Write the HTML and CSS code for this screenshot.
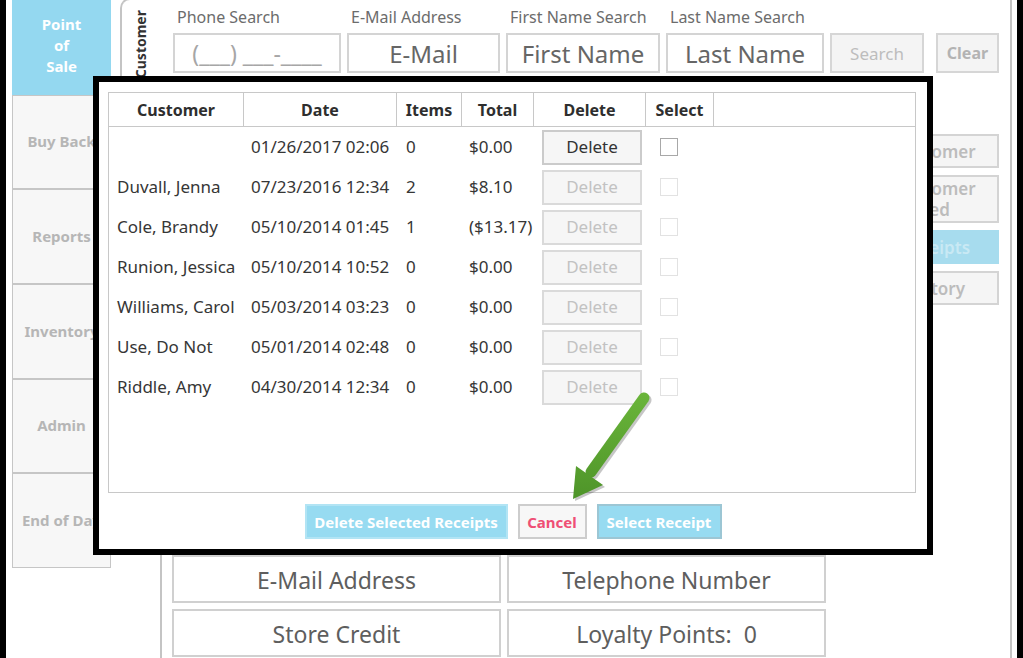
FILE: index.html
```html
<!DOCTYPE html>
<html>
<head>
<meta charset="utf-8">
<title>Point of Sale</title>
<link rel="stylesheet" href="styles.css">
</head>
<body>
<div class="frame">
  <nav class="sidebar">
    <div class="nav-btn active">Point<br>of<br>Sale</div>
    <div class="nav-btn">Buy Back</div>
    <div class="nav-btn">Reports</div>
    <div class="nav-btn">Inventory</div>
    <div class="nav-btn">Admin</div>
    <div class="nav-btn">End of Day</div>
  </nav>
  <div class="tabs">
    <div class="tab-header"><span class="tab-label">Customer</span></div>
  </div>
  <main class="panel">
    <div class="search-row">
      <div class="field f-phone"><div class="field-label">Phone Search</div><div class="input placeholder">(___) ___-____</div></div>
      <div class="field f-email"><div class="field-label">E-Mail Address</div><div class="input">E-Mail</div></div>
      <div class="field f-first"><div class="field-label">First Name Search</div><div class="input">First Name</div></div>
      <div class="field f-last"><div class="field-label">Last Name Search</div><div class="input">Last Name</div></div>
      <div class="btn btn-search">Search</div>
      <div class="btn btn-clear">Clear</div>
    </div>
    <div class="side-actions">
      <div class="side-btn">Customer</div>
      <div class="side-btn tall">Customer<br>Fed</div>
      <div class="side-btn blue">Receipts</div>
      <div class="side-btn">History</div>
    </div>
    <div class="info-grid">
      <div class="info-box">E-Mail Address</div>
      <div class="info-box">Telephone Number</div>
      <div class="info-box">Store Credit</div>
      <div class="info-box">Loyalty Points:&nbsp; 0</div>
    </div>
  </main>
</div>

<div class="modal">
  <div class="grid-box">
    <div class="grid-head">
      <div class="hcell">Customer</div>
      <div class="hcell">Date</div>
      <div class="hcell">Items</div>
      <div class="hcell">Total</div>
      <div class="hcell">Delete</div>
      <div class="hcell">Select</div>
      <div class="hcell filler"></div>
    </div>
    <div class="grid-row">
      <div class="cell c-cust"></div>
      <div class="cell c-date">01/26/2017 02:06</div>
      <div class="cell c-items">0</div>
      <div class="cell c-total">$0.00</div>
      <div class="cell c-del"><div class="del-btn">Delete</div></div>
      <div class="cell c-sel"><div class="chk"></div></div>
    </div>
    <div class="grid-row">
      <div class="cell c-cust">Duvall, Jenna</div>
      <div class="cell c-date">07/23/2016 12:34</div>
      <div class="cell c-items">2</div>
      <div class="cell c-total">$8.10</div>
      <div class="cell c-del"><div class="del-btn disabled">Delete</div></div>
      <div class="cell c-sel"><div class="chk disabled"></div></div>
    </div>
    <div class="grid-row">
      <div class="cell c-cust">Cole, Brandy</div>
      <div class="cell c-date">05/10/2014 01:45</div>
      <div class="cell c-items">1</div>
      <div class="cell c-total">($13.17)</div>
      <div class="cell c-del"><div class="del-btn disabled">Delete</div></div>
      <div class="cell c-sel"><div class="chk disabled"></div></div>
    </div>
    <div class="grid-row">
      <div class="cell c-cust">Runion, Jessica</div>
      <div class="cell c-date">05/10/2014 10:52</div>
      <div class="cell c-items">0</div>
      <div class="cell c-total">$0.00</div>
      <div class="cell c-del"><div class="del-btn disabled">Delete</div></div>
      <div class="cell c-sel"><div class="chk disabled"></div></div>
    </div>
    <div class="grid-row">
      <div class="cell c-cust">Williams, Carol</div>
      <div class="cell c-date">05/03/2014 03:23</div>
      <div class="cell c-items">0</div>
      <div class="cell c-total">$0.00</div>
      <div class="cell c-del"><div class="del-btn disabled">Delete</div></div>
      <div class="cell c-sel"><div class="chk disabled"></div></div>
    </div>
    <div class="grid-row">
      <div class="cell c-cust">Use, Do Not</div>
      <div class="cell c-date">05/01/2014 02:48</div>
      <div class="cell c-items">0</div>
      <div class="cell c-total">$0.00</div>
      <div class="cell c-del"><div class="del-btn disabled">Delete</div></div>
      <div class="cell c-sel"><div class="chk disabled"></div></div>
    </div>
    <div class="grid-row">
      <div class="cell c-cust">Riddle, Amy</div>
      <div class="cell c-date">04/30/2014 12:34</div>
      <div class="cell c-items">0</div>
      <div class="cell c-total">$0.00</div>
      <div class="cell c-del"><div class="del-btn disabled">Delete</div></div>
      <div class="cell c-sel"><div class="chk disabled"></div></div>
    </div>
  </div>
  <div class="modal-actions">
    <div class="mbtn blue-btn w-delsel">Delete Selected Receipts</div>
    <div class="mbtn cancel-btn">Cancel</div>
    <div class="mbtn blue-btn dark-edge w-select">Select Receipt</div>
  </div>
</div>

<svg class="arrow" width="1023" height="658" viewBox="0 0 1023 658" aria-hidden="true">
  <defs>
    <linearGradient id="ag" gradientUnits="userSpaceOnUse" x1="0" y1="392" x2="0" y2="500">
      <stop offset="0" stop-color="#6ab53a"/>
      <stop offset="1" stop-color="#4e9429"/>
    </linearGradient>
  </defs>
  <g opacity="0.22" transform="translate(2,2)">
    <line x1="644" y1="398" x2="591" y2="472" stroke="#000" stroke-width="11" stroke-linecap="round"/>
    <polygon points="573,499 576,466 603,485" fill="#000"/>
  </g>
  <line x1="644" y1="398" x2="591" y2="472" stroke="url(#ag)" stroke-width="11" stroke-linecap="round"/>
  <polygon points="573,499 576,466 603,485" fill="url(#ag)"/>
</svg>
</body>
</html>
```
FILE: styles.css
```css
* { box-sizing: border-box; }
html, body { margin: 0; padding: 0; }
body {
  width: 1023px;
  height: 658px;
  overflow: hidden;
  position: relative;
  background: #fff;
  font-family: "Noto Sans", "Open Sans", sans-serif;
  color: #333;
}

.frame {
  display: flex;
  height: 658px;
  border-left: 6px solid #000;
  border-right: 6px solid #000;
}

/* Sidebar */
.sidebar {
  margin-left: 6px;
  width: 99px;
  height: 568px;
  flex: none;
  display: grid;
  grid-template-rows: repeat(6, 1fr);
}
.nav-btn {
  display: flex;
  align-items: center;
  justify-content: center;
  text-align: center;
  border: 1px solid #c6c6c6;
  background: #f7f7f7;
  color: #b6b6b6;
  font-weight: 700;
  font-size: 15px;
  line-height: 21px;
  white-space: nowrap;
  overflow: hidden;
}
.nav-btn.active {
  background: #94d8f0;
  border-color: #94d8f0;
  color: #fff;
  padding-bottom: 4px;
}

/* Tab strip */
.tabs {
  flex: none;
  width: 42px;
  margin-left: 9px;
  margin-right: -2px;
  position: relative;
  z-index: 1;
}
.tab-header {
  height: 94px;
  margin-top: -2px;
  background: #fff;
  border-left: 2px solid #c4c4c4;
  border-top: 2px solid #c4c4c4;
  border-top-left-radius: 10px;
  display: flex;
  justify-content: center;
  align-items: flex-start;
  padding-top: 10px;
  padding-right: 2px;
}
.tab-label {
  writing-mode: vertical-rl;
  transform: rotate(180deg);
  font-size: 14px;
  font-weight: 700;
  color: #333;
  line-height: 16px;
}

/* Main panel */
.panel {
  flex: none;
  width: 852px;
  height: 658px;
  border-left: 2px solid #c4c4c4;
  border-right: 2px solid #c4c4c4;
  display: flex;
  flex-direction: column;
}

.search-row {
  display: flex;
  align-items: flex-end;
  padding-left: 11px;
  padding-top: 6px;
}
.field { display: flex; flex-direction: column; margin-right: 6px; }
.f-phone { width: 168px; }
.f-email { width: 153px; }
.f-first { width: 154px; }
.f-last { width: 158px; }
.field-label {
  font-size: 16px;
  line-height: 22px;
  color: #6c6c6c;
  padding-left: 4px;
  margin-bottom: 5px;
  white-space: nowrap;
}
.input {
  height: 40px;
  border: 2px solid #d4d4d4;
  background: #fff;
  display: flex;
  align-items: center;
  justify-content: center;
  font-size: 24px;
  color: #666;
  white-space: nowrap;
}
.input.placeholder {
  font-size: 23px;
  color: #a6a6a6;
}
.btn {
  height: 40px;
  border: 2px solid #d6d6d6;
  background: #f4f4f4;
  display: flex;
  align-items: center;
  justify-content: center;
  color: #bdbdbd;
}
.btn-search { width: 94px; font-size: 17px; }
.btn-clear { width: 63px; margin-left: 12px; font-size: 16px; font-weight: 700; color: #b3b3b3; }

.side-actions {
  align-self: flex-end;
  width: 124px;
  margin-right: 11px;
  margin-top: 61px;
  display: flex;
  flex-direction: column;
  gap: 7px;
}
.side-btn {
  height: 34px;
  border: 2px solid #d4d4d4;
  background: #f5f5f5;
  color: #bcbcbc;
  font-size: 17px;
  font-weight: 600;
  line-height: 21px;
  display: flex;
  align-items: center;
  justify-content: center;
  text-align: center;
  padding-right: 4px;
}
.side-btn.tall { height: 48px; }
.side-btn.blue {
  background: #a7dcee;
  border-color: #a7dcee;
  color: #c9e9f4;
}

.info-grid {
  margin-top: 250px;
  padding-left: 10px;
  display: grid;
  grid-template-columns: 329px 319px;
  grid-auto-rows: 48px;
  gap: 6px;
}
.info-box {
  border: 2px solid #d0d0d0;
  display: flex;
  align-items: center;
  justify-content: center;
  padding-top: 2px;
  font-size: 23px;
  color: #5e5e5e;
  white-space: nowrap;
}

/* Modal */
.modal {
  position: absolute;
  left: 93px;
  top: 76px;
  width: 840px;
  height: 479px;
  border: 6px solid #000;
  background: #fff;
  padding: 10px 11px 10px 9px;
  display: flex;
  flex-direction: column;
  z-index: 5;
}
.grid-box {
  height: 401px;
  border: 1px solid #c8c8c8;
  flex: none;
}
.grid-head,
.grid-row {
  display: grid;
  grid-template-columns: 135px 153px 65px 72px 112px 68px 1fr;
}
.grid-head {
  height: 34px;
  border-bottom: 1px solid #c8c8c8;
}
.hcell {
  border-right: 1px solid #c8c8c8;
  display: flex;
  align-items: center;
  justify-content: center;
  font-size: 16px;
  font-weight: 700;
  color: #2e2e2e;
}
.hcell.filler { border-right: none; }

.grid-row { height: 40px; }
.cell {
  display: flex;
  align-items: center;
  font-size: 17px;
  color: #363636;
  white-space: nowrap;
  padding-bottom: 1px;
}
.c-cust { padding-left: 8px; }
.c-date { padding-left: 7px; }
.c-items { padding-left: 9px; }
.c-total { padding-left: 7px; }
.c-del { padding-left: 8px; padding-bottom: 0; }
.c-sel { padding-left: 14px; }

.del-btn {
  width: 100px;
  height: 35px;
  border: 2px solid #cbcbcb;
  background: #f6f6f6;
  display: flex;
  align-items: center;
  justify-content: center;
  padding-bottom: 2px;
  font-size: 17px;
  color: #333;
}
.del-btn.disabled {
  border-color: #dadada;
  color: #c2c2c2;
}
.chk {
  width: 18px;
  height: 18px;
  border: 1px solid #a8a8a8;
  background: #fff;
}
.chk.disabled { border-color: #e2e2e2; }

.modal-actions {
  margin-top: 11px;
  display: flex;
  justify-content: center;
  gap: 10px;
  padding-left: 2px;
}
.mbtn {
  height: 35px;
  display: flex;
  align-items: center;
  justify-content: center;
  font-size: 15px;
  font-weight: 700;
  white-space: nowrap;
}
.blue-btn {
  background: #97dbf1;
  border: 2px solid #b2e4f4;
  color: #fff;
}
.blue-btn.dark-edge { border-color: #9cc6d4; }
.w-delsel { width: 203px; }
.w-select { width: 125px; }
.cancel-btn {
  width: 69px;
  background: #f7f7f7;
  border: 2px solid #cdcdcd;
  color: #ef4f75;
}

.arrow {
  position: absolute;
  left: 0;
  top: 0;
  pointer-events: none;
  z-index: 10;
}
```
